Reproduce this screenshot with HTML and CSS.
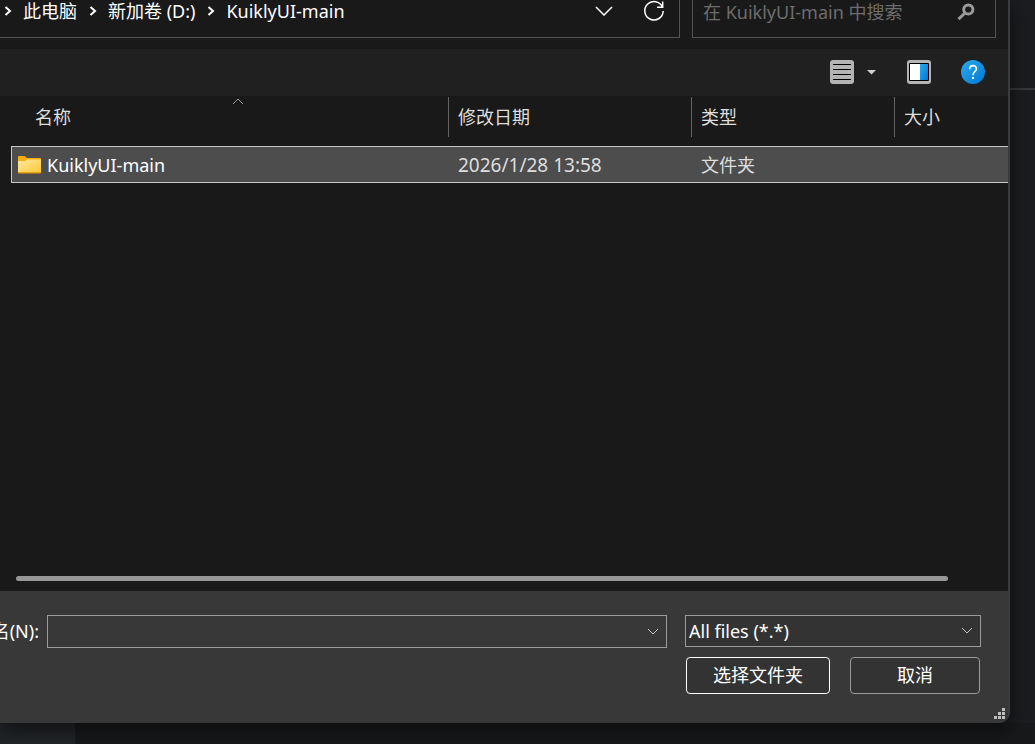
FILE: index.html
```html
<!DOCTYPE html>
<html lang="zh-CN">
<head>
    <meta charset="UTF-8">
    <title>选择文件夹</title>
    <link rel="stylesheet" href="styles.css">
</head>
<body>

    <div class="dialog">

        <!-- 地址栏 -->
        <div class="top">
            <nav class="address">
                <svg class="sep" width="8" height="10" viewBox="0 0 8 10"><path d="M1.5 1L6 5L1.5 9"/></svg>
                <a href="#">此电脑</a>
                <svg class="sep" width="8" height="10" viewBox="0 0 8 10"><path d="M1.5 1L6 5L1.5 9"/></svg>
                <a href="#">新加卷 (D:)</a>
                <svg class="sep" width="8" height="10" viewBox="0 0 8 10"><path d="M1.5 1L6 5L1.5 9"/></svg>
                <a href="#">KuiklyUI-main</a>
                <div class="address-tools">
                    <button type="button" aria-label="历史记录">
                        <svg width="18" height="10" viewBox="0 0 18 10"><path d="M1 1L9 9L17 1"/></svg>
                    </button>
                    <button type="button" aria-label="刷新">
                        <svg width="22" height="22" viewBox="0 0 22 22"><path d="M19.4 7A9.2 9.2 0 1 0 20.2 11M19.7 1.5V7.2H14"/></svg>
                    </button>
                </div>
            </nav>
            <div class="search">
                <input type="text" aria-label="搜索" placeholder="在 KuiklyUI-main 中搜索">
                <svg width="18" height="18" viewBox="0 0 18 18"><circle cx="11.3" cy="6.5" r="4.6"/><path d="M8 10L1.5 16.2"/></svg>
            </div>
        </div>

        <!-- 工具栏 -->
        <div class="toolbar">
            <button type="button" aria-label="视图">
                <svg width="24" height="24" viewBox="0 0 24 24">
                    <rect width="24" height="24" rx="3" fill="#b4b4b4"/>
                    <path d="M3.5 4.5H20.5M3.5 9.5H20.5M3.5 14.5H20.5M3.5 19.5H20.5" stroke="#000" stroke-linecap="round"/>
                </svg>
            </button>
            <button type="button" class="more" aria-label="更多选项">
                <svg width="9" height="5" viewBox="0 0 9 5"><path d="M0 0H9L4.5 4.5Z" fill="#d0d0d0"/></svg>
            </button>
            <button type="button" class="preview" aria-label="预览窗格">
                <svg width="24" height="24" viewBox="0 0 24 24">
                    <defs>
                        <linearGradient id="pane" x1="0" y1="0" x2="1" y2="1">
                            <stop offset="0" stop-color="#2cabeb"/>
                            <stop offset="1" stop-color="#0078d4"/>
                        </linearGradient>
                    </defs>
                    <rect width="24" height="24" rx="3" fill="#b4b4b4"/>
                    <rect x="2" y="3" width="20" height="18" rx="1" fill="#000"/>
                    <rect x="3" y="4" width="10" height="16" fill="#fff"/>
                    <rect x="13" y="4" width="8" height="16" fill="url(#pane)"/>
                </svg>
            </button>
            <button type="button" class="help" aria-label="帮助">
                <svg width="24" height="24" viewBox="0 0 24 24">
                    <circle cx="12" cy="12" r="12" fill="url(#pane)"/>
                    <path d="M8.7 9.2C8.7 4.4 15.4 4.7 15.4 8.8C15.4 11.6 12 11.5 12 15.2" fill="none" stroke="#fff" stroke-width="1.6"/>
                    <rect x="11" y="17" width="2" height="2" fill="#fff"/>
                </svg>
            </button>
        </div>

        <!-- 文件列表 -->
        <div class="list">
            <table class="files">
                <thead>
                    <tr>
                        <th class="col-name">
                            <button type="button">名称
                                <svg class="sort" width="12" height="7" viewBox="0 0 12 7"><path d="M1 6L6 1L11 6"/></svg>
                            </button>
                        </th>
                        <th class="col-date"><button type="button">修改日期</button></th>
                        <th class="col-type"><button type="button">类型</button></th>
                        <th><button type="button">大小</button></th>
                    </tr>
                </thead>
                <tbody>
                    <tr>
                        <td>
                            <div class="name">
                                <svg width="23" height="18" viewBox="0 0 23 18">
                                    <defs>
                                        <linearGradient id="folder" x1="0" y1="0" x2="1" y2="1">
                                            <stop offset="0" stop-color="#ffe9a2"/>
                                            <stop offset="1" stop-color="#ffc937"/>
                                        </linearGradient>
                                    </defs>
                                    <path d="M0 1Q0 0 1 0H6.5L9 2H22Q23 2 23 3V17H0Z" fill="#f6ad12"/>
                                    <path d="M0 5H7L9 3.5H23V16H0Z" fill="url(#folder)"/>
                                    <path d="M0 16H23V16.5Q23 17.5 22 17.5H1Q0 17.5 0 16.5Z" fill="#e5a00d"/>
                                </svg>
                                KuiklyUI-main
                            </div>
                        </td>
                        <td class="date">2026/1/28 13:58</td>
                        <td>文件夹</td>
                        <td></td>
                    </tr>
                </tbody>
            </table>
            <div class="scrollbar"></div>
        </div>

        <!-- 底部 -->
        <form class="footer">
            <div class="row">
                <label for="fileName">文件名(N):</label>
                <div class="combo">
                    <input type="text" id="fileName" name="fileName">
                    <button type="button" aria-label="展开">
                        <svg width="12" height="7" viewBox="0 0 12 7"><path d="M1 1L6 6L11 1"/></svg>
                    </button>
                </div>
                <div class="filter">
                    <select name="fileType" aria-label="文件类型">
                        <option>All files (*.*)</option>
                    </select>
                    <svg width="12" height="7" viewBox="0 0 12 7"><path d="M1 1L6 6L11 1"/></svg>
                </div>
            </div>
            <div class="actions">
                <button type="submit" class="btn primary">选择文件夹</button>
                <button type="button" class="btn">取消</button>
            </div>
            <svg class="grip" width="12" height="12" viewBox="0 0 12 12">
                <path d="M8 0h3v3h-3zM4 4h3v3h-3zM8 4h3v3h-3zM0 8h3v3h-3zM4 8h3v3h-3zM8 8h3v3h-3z"/>
            </svg>
        </form>

    </div>

    <!-- 后面的窗口 -->
    <div class="back-right"></div>
    <div class="back-bottom"></div>

</body>
</html>
```
FILE: styles.css
```css
* {
    box-sizing: border-box;
}

body {
    margin: 0;
    min-height: 100vh;
    display: grid;
    grid-template-columns: 1fr 25px;
    grid-template-rows: 1fr 21px;
    background: #1c1d20;
    color: #fff;
    font: 18px/24px "Noto Sans", "Noto Sans CJK SC", sans-serif;
}

button,
input,
select {
    margin: 0;
    padding: 0;
    border: 0;
    background: none;
    color: inherit;
    font: inherit;
}

svg {
    display: block;
    flex: none;
}

.dialog {
    position: relative;
    z-index: 1;
    min-width: 0;
    display: flex;
    flex-direction: column;
    background: #191919;
    border-right: 2px solid #3c3c3d;
    border-bottom-right-radius: 11px;
    box-shadow: 0 6px 22px rgba(0, 0, 0, 0.6);
    overflow: hidden;
}

/* 地址栏 */
.top {
    display: flex;
    gap: 12px;
    padding: 0 12px 11px 0;
}

.address {
    flex: 1;
    display: flex;
    align-items: center;
    height: 38px;
    padding: 0 14px 15px 4px;
    border: 1px solid #535353;
    border-width: 0 1px 1px 0;
}

.address a {
    margin: 0 12px 0 11px;
    color: #fff;
    text-decoration: none;
    white-space: nowrap;
}

.address a:hover {
    text-decoration: underline;
}

.address svg {
    fill: none;
    stroke: #fff;
    stroke-width: 1.5;
}

.address .sep {
    stroke-width: 2;
}

.address-tools {
    display: flex;
    align-items: center;
    gap: 30px;
    margin-left: auto;
}

.search {
    width: 304px;
    height: 38px;
    display: flex;
    align-items: center;
    padding: 0 20px 14px 10px;
    border: 1px solid #535353;
    border-top: 0;
}

.search input {
    flex: 1;
    min-width: 0;
    outline: none;
}

.search input::placeholder {
    color: #6d6d6d;
}

.search svg {
    fill: none;
    stroke: #9a9a9a;
    stroke-width: 3;
}

/* 工具栏 */
.toolbar {
    display: flex;
    align-items: center;
    justify-content: flex-end;
    height: 47px;
    padding: 0 23px 1px 0;
    background: #202020;
}

.more {
    margin-left: 13px;
}

.preview {
    margin-left: 31px;
}

.help {
    margin-left: 30px;
}

/* 文件列表 */
.list {
    flex: 1;
    display: flex;
    flex-direction: column;
    padding: 1px 0 10px 11px;
}

.files {
    width: 100%;
    table-layout: fixed;
    border-spacing: 0;
}

.col-name {
    width: 437px;
}

.col-date {
    width: 243px;
}

.col-type {
    width: 203px;
}

.files th {
    padding: 0 0 9px;
    font-weight: normal;
}

.files th button {
    position: relative;
    display: block;
    width: 100%;
    height: 40px;
    padding-left: 9px;
    border-left: 1px solid #636363;
    color: #dedede;
    text-align: left;
}

.files .col-name button {
    padding-left: 24px;
    border-left: 0;
}

.sort {
    position: absolute;
    top: 1px;
    left: calc(50% + 2px);
    fill: none;
    stroke: #9a9a9a;
}

.files td {
    height: 37px;
    padding: 0 0 0 10px;
    background: #4d4d4d;
    border: 1px solid #c8c8c8;
    border-width: 1px 0;
    color: #dedede;
}

.files td:first-child {
    padding-left: 6px;
    border-left-width: 1px;
}

.files .date {
    font-size: 19px;
}

.name {
    display: flex;
    align-items: center;
    gap: 6px;
    color: #fff;
}

.scrollbar {
    height: 5px;
    margin: auto 60px 0 5px;
    background: #979797;
    border-radius: 3px;
}

/* 底部 */
.footer {
    position: relative;
    padding: 24px 27px 29px 0;
    background: #383838;
}

.row {
    display: flex;
    align-items: flex-start;
}

.row label {
    width: 39px;
    margin-right: 8px;
    display: flex;
    justify-content: flex-end;
    line-height: 33px;
    white-space: nowrap;
}

.combo {
    flex: 1;
    display: flex;
    height: 33px;
    padding-right: 7px;
    border: 1px solid #9b9b9b;
}

.combo input {
    flex: 1;
    min-width: 0;
    padding: 0 4px;
    outline: none;
}

.filter {
    position: relative;
    width: 296px;
    margin-left: 18px;
}

.filter select {
    display: block;
    width: 100%;
    height: 32px;
    padding-left: 3px;
    border: 1px solid #9b9b9b;
    background: #333;
    appearance: none;
}

.filter svg {
    position: absolute;
    top: 12px;
    right: 8px;
    pointer-events: none;
}

.combo svg,
.filter svg {
    fill: none;
    stroke: #c4c4c4;
}

.actions {
    display: flex;
    justify-content: flex-end;
    gap: 20px;
    margin: 9px 1px 0 0;
}

.btn {
    width: 130px;
    height: 37px;
    padding-bottom: 2px;
    background: #333;
    border: 1px solid #9b9b9b;
    border-radius: 4px;
}

.primary {
    width: 144px;
    border-color: #fff;
}

.grip {
    position: absolute;
    right: 2px;
    bottom: 3px;
    fill: #bfbfbf;
}

/* 后面的窗口 */
.back-right {
    background: linear-gradient(#37383a, #37383a) 0 88px / 100% 2px no-repeat;
}

.back-bottom {
    grid-column: 1 / 3;
    background: linear-gradient(90deg, #222528 75px, #18191b 75px);
}
```
